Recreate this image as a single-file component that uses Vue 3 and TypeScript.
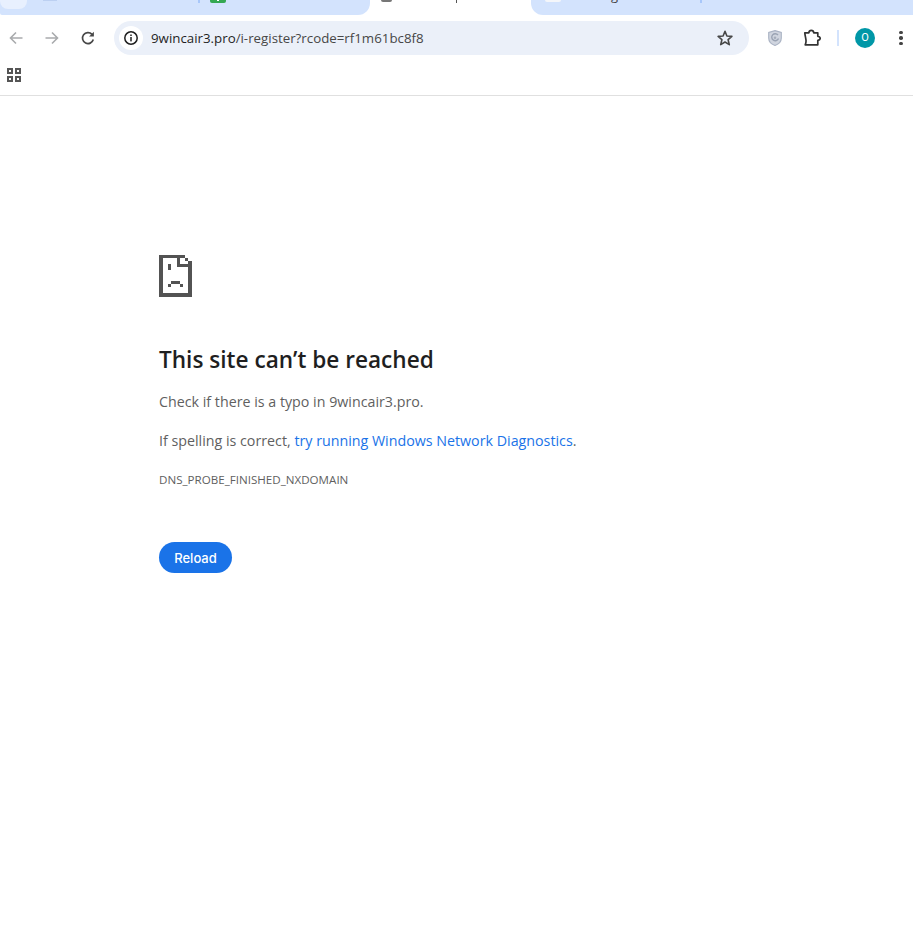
<script setup lang="ts">
const host = '9wincair3.pro'
const path = '/i-register?rcode=rf1m61bc8f8'
</script>

<template>
  <div class="window">
    <div class="tabstrip">
      <div class="tabs-left">
        <span class="new-pill"></span>
        <span class="faint"></span>
        <span class="sep sep-a"></span>
        <span class="fav-green"><i></i></span>
      </div>
      <div class="tab-active">
        <span class="fav-grey"></span>
        <span class="tab-tick"></span>
      </div>
      <div class="tabs-right">
        <span class="fav-white"></span>
        <span class="tab-g">g</span>
        <span class="sep sep-b"></span>
      </div>
    </div>

    <div class="toolbar">
      <svg class="nav back" width="16" height="16" viewBox="0 0 16 16"><path d="M14.500 8H2.500M8 2.500 2.500 8 8 13.500" fill="none" stroke="#a9abad" stroke-width="1.600"/></svg>
      <svg class="nav forward" width="16" height="16" viewBox="0 0 16 16"><path d="M1.500 8H13.500M8 2.500 13.500 8 8 13.500" fill="none" stroke="#a9abad" stroke-width="1.600"/></svg>
      <svg class="nav reload" width="16" height="16" viewBox="0 0 16 16"><path d="M13.300 9.600A5.500 5.500 0 1 1 12 4.300" fill="none" stroke="#474747" stroke-width="1.700"/><path d="M13.900 1.700V6.500H9.100Z" fill="#474747"/></svg>

      <div class="omnibox">
        <span class="site-info">
          <svg width="16" height="16" viewBox="0 0 16 16"><circle cx="8" cy="8" r="6.200" fill="none" stroke="#1f1f1f" stroke-width="1.500"/><rect x="7.250" y="7" width="1.500" height="4.400" fill="#1f1f1f"/><rect x="7.250" y="4.500" width="1.500" height="1.500" fill="#1f1f1f"/></svg>
        </span>
        <span class="url"><span class="host">{{ host }}</span>{{ path }}</span>
        <svg class="star" width="18" height="18" viewBox="0 0 18 18"><path d="M9 2.300 10.900 7 15.900 7.400 12.100 10.700 13.300 15.600 9 13 4.700 15.600 5.900 10.700 2.100 7.400 7.100 7Z" fill="none" stroke="#474747" stroke-width="1.600" stroke-linejoin="round"/></svg>
      </div>

      <svg class="shield" width="14" height="16" viewBox="0 0 14 16"><path d="M7 .6 13.300 2.400V8C13.300 11.800 10.400 14.300 7 15.500 3.600 14.300 .7 11.800 .7 8V2.400Z" fill="#d0d5df" stroke="#aab3c4" stroke-width="1.100"/><path d="M10 5A3.500 3.500 0 1 0 10.500 8.500" fill="none" stroke="#9aa3b3" stroke-width="1.400"/><circle cx="7" cy="7.800" r="1.300" fill="#a5adbb"/></svg>
      <svg class="puzzle" width="18" height="18" viewBox="0 0 18 18"><path d="M1.800 3.800H5.800C6 2.300 6.800 1.400 8.300 1.400 9.800 1.400 10.600 2.300 10.800 3.800H14.800V7.300C16.400 7.400 17.200 8.100 17.200 9.300 17.200 10.500 16.400 11.200 14.800 11.300V15.800H2.200C3.200 13.800 3.200 11.800 2.800 9.800 2.500 8.200 2 6 1.800 3.800Z" fill="none" stroke="#333" stroke-width="1.700" stroke-linejoin="round"/></svg>
      <span class="tool-sep"></span>
      <span class="avatar">O</span>
      <span class="menu"><i></i><i></i><i></i></span>
    </div>

    <div class="bookmarks">
      <span class="apps"><i></i><i></i><i></i><i></i></span>
    </div>

    <main class="page">
      <svg class="sad" width="33" height="42" viewBox="0 0 33 42" shape-rendering="crispEdges">
        <path fill="#535353" fill-rule="evenodd" d="M0 0H26V3H29V6H33V42H0ZM4 3V38H29V12H18V3ZM21 3V9H29V6H26V3Z"/>
        <rect x="9" y="9" width="3" height="6" fill="#535353"/>
        <path fill="#535353" d="M12 26H21V29H24V32H21V29H12V32H9V29H12Z"/>
      </svg>
      <h1>This site can’t be reached</h1>
      <p class="first">Check if there is a typo in {{ host }}.</p>
      <p class="second">If spelling is correct, <a>try running Windows Network Diagnostics</a>.</p>
      <div class="code">DNS_PROBE_FINISHED_NXDOMAIN</div>
      <button class="reload-btn">Reload</button>
    </main>
  </div>
</template>

<style>
html, body { margin: 0; background: #fff; }
</style>

<style scoped>
.window { width: 913px; height: 947px; overflow: hidden; background: #fff; display: flex; flex-direction: column; font-family: "Open Sans", "Noto Sans", sans-serif; }
.tabstrip { height: 15px; display: flex; flex: none; overflow: hidden; align-items: flex-start; }
.tabs-left { width: 370px; height: 15px; background: #d3e3fd; border-radius: 0 0 12px 2px; display: flex; align-items: flex-start; }
.new-pill { width: 27px; height: 9px; background: #e8f0fe; border-radius: 0 0 8px 8px; }
.faint { width: 14px; height: 1px; margin-left: 16px; background: #bcd0f2; }
.sep { width: 2px; height: 3px; background: #a8c7fa; }
.sep-a { margin-left: 141px; }
.fav-green { width: 16px; height: 3px; margin-left: 10px; background: #34a853; border-radius: 0 0 2px 2px; display: flex; justify-content: center; }
.fav-green i { width: 2px; height: 1px; background: #fff; }
.tab-active { width: 161px; height: 15px; display: flex; align-items: flex-start; }
.fav-grey { width: 11px; height: 2px; margin-left: 11px; background: #777; border-radius: 0 0 6px 6px; }
.tab-tick { width: 1px; height: 3px; margin-left: 64px; background: #555; }
.tabs-right { flex: 1; height: 15px; background: #d3e3fd; border-radius: 0 0 0 12px; display: flex; align-items: flex-start; overflow: hidden; }
.fav-white { width: 16px; height: 2px; margin-left: 14px; background: #f4f6fa; border-radius: 0 0 3px 3px; }
.tab-g { width: 9px; margin: -14px 0 0 50px; font-size: 13px; line-height: 18px; color: #444; }
.sep-b { margin-left: 80px; }

.toolbar { height: 46px; flex: none; display: flex; align-items: center; }
.nav { flex: none; }
.back { margin-left: 8px; }
.forward { margin-left: 20px; }
.reload { margin-left: 20px; }
.omnibox { width: 635px; height: 34px; margin-left: 18px; background: #ebf0f9; border-radius: 17px; display: flex; align-items: center; flex: none; }
.site-info { width: 24px; height: 24px; margin-left: 5px; border-radius: 50%; background: #fff; display: flex; align-items: center; justify-content: center; }
.url { margin-left: 8px; flex: 1; font-size: 13.300px; color: #474747; white-space: nowrap; }
.host { color: #1f1f1f; }
.star { margin-right: 15px; }
.shield { margin-left: 19px; }
.puzzle { margin-left: 21px; }
.tool-sep { width: 2px; height: 16px; margin-left: 16px; background: #d3e3fd; }
.avatar { width: 20px; height: 20px; margin-left: 16px; border-radius: 50%; background: #0097a7; color: #fff; font-size: 11px; line-height: 20px; text-align: center; font-family: "Roboto", sans-serif; }
.menu { margin-left: 24px; width: 4px; display: flex; flex-direction: column; gap: 2px; }
.menu i { width: 3.500px; height: 3.500px; border-radius: 50%; background: #444; }

.bookmarks { flex: none; border-bottom: 1px solid #e0e0e0; display: flex; align-items: flex-start; padding-left: 7px; box-sizing: border-box; height: 35px; padding-top: 7px; }
.apps { display: grid; grid-template-columns: 6px 6px; gap: 2px; }
.apps i { height: 6px; box-sizing: border-box; border: 2px solid #555; }

.page { flex: 1; padding: 159px 0 0 159px; }
.sad { display: block; }
h1 { margin: 47px 0 0; font-size: 22.600px; line-height: 32px; font-weight: 600; color: #1f1f1f; }
p { margin: 0; font-size: 14.260px; line-height: 20px; color: #5f5f5f; }
.first { margin-top: 16px; }
.second { margin-top: 19px; }
a { color: #1a73e8; }
.code { margin-top: 20px; font-size: 11.600px; line-height: 18px; color: #5f5f5f; }
.reload-btn { display: block; margin-top: 53px; width: 73px; height: 31px; padding: 0; border: 0; border-radius: 16px; background: #1a73e8; color: #fff; font-family: "Inter", "Roboto", sans-serif; font-size: 13px; font-weight: 500; }
</style>
